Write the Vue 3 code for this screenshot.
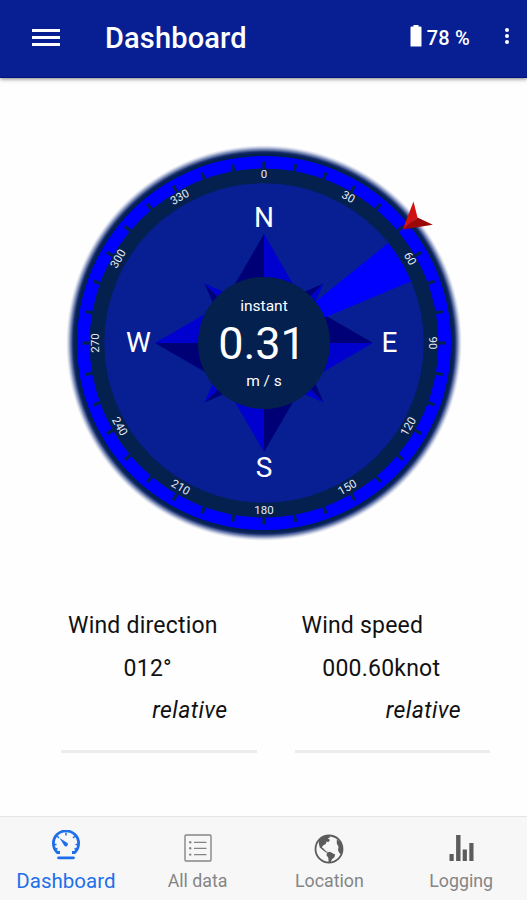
<script setup>
import { ref, computed } from 'vue'

const battery = ref(78)
const windSpeed = ref('0.31')
const activeTab = ref('dashboard')

const ticks = Array.from({ length: 36 }, (_, i) => i * 10)

// labels on the lower half are flipped so they stay readable
const degrees = Array.from({ length: 12 }, (_, i) => {
  const angle = i * 30
  const flipped = angle > 90 && angle < 270
  return { angle, flipped }
})

const quarters = [0, 90, 180, 270]

const cardinals = [
  { name: 'N', x: 0, y: -116.5 },
  { name: 'E', x: 125.5, y: 9 },
  { name: 'S', x: 0, y: 134 },
  { name: 'W', x: -125.5, y: 9 }
]

const sector = { from: 51.2, to: 67.2, radius: 159.5 }

const polar = (angle, radius) => {
  const rad = (angle * Math.PI) / 180
  return `${(Math.sin(rad) * radius).toFixed(2)} ${(-Math.cos(rad) * radius).toFixed(2)}`
}

const sectorPath = computed(() => {
  const { from, to, radius } = sector
  return `M0 0L${polar(from, radius)}A${radius} ${radius} 0 0 1 ${polar(to, radius)}Z`
})

const readings = [
  { title: 'Wind direction', value: '012°', mode: 'relative' },
  { title: 'Wind speed', value: '000.60knot', mode: 'relative' }
]

const tabs = [
  { id: 'dashboard', label: 'Dashboard' },
  { id: 'data', label: 'All data' },
  { id: 'location', label: 'Location' },
  { id: 'logging', label: 'Logging' }
]
</script>

<template>
  <div class="app">
    <header class="toolbar">
      <button class="menu-btn" aria-label="Menu">
        <span></span>
        <span></span>
        <span></span>
      </button>
      <h1 class="title">Dashboard</h1>
      <div class="battery">
        <svg width="12" height="22" viewBox="0 0 12 22">
          <path d="M3.5 0h5v1.500H10.500q1 0 1 1V21.500H.5V2.500q0-1 1-1h2z" fill="#fff" />
        </svg>
        <span class="level">{{ battery }} %</span>
      </div>
      <button class="more-btn" aria-label="More">
        <span></span>
        <span></span>
        <span></span>
      </button>
    </header>

    <main class="content">
      <svg class="compass" width="400" height="400" viewBox="-200 -200 400 400">
        <defs>
          <radialGradient id="glow" gradientUnits="userSpaceOnUse" cx="0" cy="0" r="198">
            <stop offset="0.955" stop-color="#04204f" />
            <stop offset="0.965" stop-color="#142c6c" />
            <stop offset="0.980" stop-color="#6f80b2" stop-opacity="0.85" />
            <stop offset="1" stop-color="#c0c8e0" stop-opacity="0" />
          </radialGradient>
        </defs>

        <circle r="198" fill="url(#glow)" />
        <circle r="187" fill="#0000ff" />
        <circle r="174.5" fill="#04204f" />
        <rect
          v-for="t in ticks"
          :key="t"
          x="-1.6"
          y="-181.5"
          width="3.2"
          height="8"
          fill="#04204f"
          :transform="`rotate(${t})`"
        />
        <circle r="159.7" fill="#071f93" />

        <text
          v-for="d in degrees"
          :key="d.angle"
          class="degree"
          :y="d.flipped ? 170.5 : -164.8"
          :transform="`rotate(${d.flipped ? d.angle - 180 : d.angle})`"
        >{{ d.angle }}</text>

        <g v-for="q in quarters" :key="q" :transform="`rotate(${q})`">
          <path d="M59.5 -59.5L0 -33.6V0Z" fill="#00007a" />
          <path d="M59.5 -59.5L33.6 0H0Z" fill="#0000cf" />
        </g>
        <g v-for="q in quarters" :key="'main' + q" :transform="`rotate(${q})`">
          <path d="M0 -109L-40 -40L0 0Z" fill="#000076" />
          <path d="M0 -109L40 -40L0 0Z" fill="#0000cf" />
        </g>

        <path :d="sectorPath" fill="#0000ff" />
        <circle r="66" fill="#04204f" />

        <text v-for="c in cardinals" :key="c.name" class="cardinal" :x="c.x" :y="c.y">{{ c.name }}</text>

        <text class="unit" y="-32">instant</text>
        <text class="speed" x="-2" y="15.5">{{ windSpeed }}</text>
        <text class="unit" y="42.8">m / s</text>

        <!-- wind pointer -->
        <path d="M138.7 -113.5L149.5 -141.5L153.5 -125.5Z" fill="#d01212" />
        <path d="M138.7 -113.5L168.8 -118.2L153.5 -125.5Z" fill="#9c0808" />
      </svg>

      <section class="readings">
        <article v-for="r in readings" :key="r.title" class="reading">
          <div class="reading-title">{{ r.title }}</div>
          <div class="reading-value">{{ r.value }}</div>
          <div class="reading-mode">{{ r.mode }}</div>
        </article>
      </section>
    </main>

    <nav class="tabs">
      <button
        v-for="tab in tabs"
        :key="tab.id"
        class="tab"
        :class="{ active: tab.id === activeTab }"
        @click="activeTab = tab.id"
      >
        <svg v-if="tab.id === 'dashboard'" width="30" height="30" viewBox="0 0 30 30" fill="none" stroke="currentColor">
          <path d="M9 22.5H6.2A12.6 12.6 0 1 1 23.8 22.500H21" stroke-width="2.8" stroke-linejoin="round" />
          <path d="M15 2.500V5.500M6.200 6.200L8 8M23.800 6.200L22 8M2.500 14.500H5.500M27.500 14.500H24.500M4 19.500L6.500 18.500M26 19.500L23.500 18.500" stroke-width="1.5" />
          <path d="M8.500 8L16.500 13A2 2 0 1 1 13.200 15.500Z" fill="currentColor" stroke="none" />
          <path d="M7.500 27.800H22.500" stroke-width="2.8" stroke-linecap="round" />
        </svg>
        <svg v-else-if="tab.id === 'data'" width="28" height="28" viewBox="0 0 28 28" fill="none" stroke="currentColor">
          <rect x="1" y="1" width="26" height="26" rx="1" stroke-width="1.4" />
          <path d="M10 8.300H22.500M10 14.300H22.500M10 20.600H22.500" stroke-width="1.3" />
          <g fill="currentColor" stroke="none">
            <circle cx="6.2" cy="8.3" r="1.2" />
            <circle cx="6.2" cy="14.3" r="1.2" />
            <circle cx="6.2" cy="20.6" r="1.2" />
          </g>
        </svg>
        <svg v-else-if="tab.id === 'location'" width="30" height="30" viewBox="0 0 30 30">
          <circle cx="15" cy="15" r="13.5" fill="none" stroke="currentColor" stroke-width="1.8" />
          <g fill="currentColor">
            <path d="M5 6.500C8 3 11.500 1.700 15.500 1.700L16 3.500L13.800 4.200L16 6L14.300 8.200L12.500 7.500L11.800 10L9.300 11.300L7.800 13.500L9.500 14.500L12 17.300L14 18L12 18.500L8.500 15.800L5.800 13.600L4.800 9.500Z" />
            <path d="M13 18.400L16 17.800L19 19.600L21.200 20.600L20.300 23.600L18.200 25L16.300 28.500L14.700 28L14.300 23.700L12.500 21.300Z" />
            <path d="M22.800 5.300L26.800 8.800L28.500 13.500L28.300 18L26.200 20.300L24 16.500L24.500 12.700L22.800 9.500Z" />
          </g>
        </svg>
        <svg v-else width="28" height="28" viewBox="0 0 28 28" fill="currentColor">
          <rect x="2.500" y="20" width="4.2" height="7" />
          <rect x="9.1" y="1" width="4.4" height="26" />
          <rect x="15.7" y="15.5" width="4.2" height="11.5" />
          <rect x="22.3" y="9" width="4.2" height="18" />
        </svg>
        <span class="tab-label">{{ tab.label }}</span>
      </button>
    </nav>
  </div>
</template>

<style>
body {
  margin: 0;
  background: #fff;
}
</style>

<style scoped>
.app {
  display: flex;
  flex-direction: column;
  width: 527px;
  height: 900px;
  overflow: hidden;
  background: #fefefe;
  font-family: Roboto, sans-serif;
  color: #111;
}

button {
  padding: 0;
  border: none;
  background: none;
  font: inherit;
}

.toolbar {
  display: flex;
  align-items: center;
  flex: none;
  box-sizing: border-box;
  height: 78px;
  padding: 0 18px 2px 32px;
  background: #071f93;
  border-bottom: 1px solid #04107c;
  box-shadow: 0 1px 4px rgba(0, 0, 0, 0.5);
  color: #fff;
}

.menu-btn {
  display: flex;
  flex-direction: column;
  gap: 4px;
  width: 28px;
}

.menu-btn span {
  height: 3px;
  background: #fff;
}

.title {
  flex: 1;
  margin: 1px 0 0 45px;
  font-size: 29px;
  font-weight: 500;
  line-height: 36px;
  letter-spacing: 0.15px;
}

.battery {
  display: flex;
  align-items: center;
  gap: 5px;
  margin-right: 35px;
}

.battery svg {
  margin-top: -3px;
}

.level {
  font-size: 20px;
  font-weight: 500;
  line-height: 24px;
  letter-spacing: 0.2px;
}

.more-btn {
  display: flex;
  flex-direction: column;
  gap: 2px;
  margin-top: -4px;
}

.more-btn span {
  width: 4px;
  height: 4px;
  border-radius: 50%;
  background: #fff;
}

.content {
  flex: 1;
  display: flex;
  flex-direction: column;
  align-items: center;
  padding-top: 65px;
}

.compass {
  display: block;
}

.compass text {
  fill: #fff;
  text-anchor: middle;
}

.compass .degree {
  font-size: 11.5px;
  fill: #e6ebf5;
}

.cardinal {
  font-size: 28px;
}

.unit {
  font-size: 15.5px;
}

.speed {
  font-size: 45px;
}

.readings {
  display: flex;
  gap: 38px;
  align-self: stretch;
  padding: 62px 37px 0 61px;
}

.reading {
  flex: 1;
  padding: 0 29px 17px 7px;
  border-bottom: 3px solid #ececec;
  font-size: 23px;
  line-height: 42.6px;
  letter-spacing: 0.22px;
  white-space: nowrap;
}

.reading-value {
  text-align: center;
}

.reading-mode {
  text-align: right;
  font-style: italic;
  letter-spacing: 0.4px;
}

.tabs {
  display: flex;
  flex: none;
  box-sizing: border-box;
  height: 84px;
  background: #f7f7f7;
  border-top: 1px solid #e4e4e4;
}

.tab {
  flex: 1;
  display: flex;
  flex-direction: column;
  align-items: center;
  justify-content: flex-end;
  gap: 7px;
  padding-bottom: 7px;
  color: #858585;
  font-size: 17.8px;
  line-height: 24px;
}

.tab svg {
  flex: none;
}

.tab:nth-child(3) {
  gap: 5px;
}

.tab:nth-child(n + 3) svg {
  color: #5c5c5c;
}

.tab.active {
  gap: 9px;
  color: #1f6fea;
  font-size: 20.5px;
}
</style>
